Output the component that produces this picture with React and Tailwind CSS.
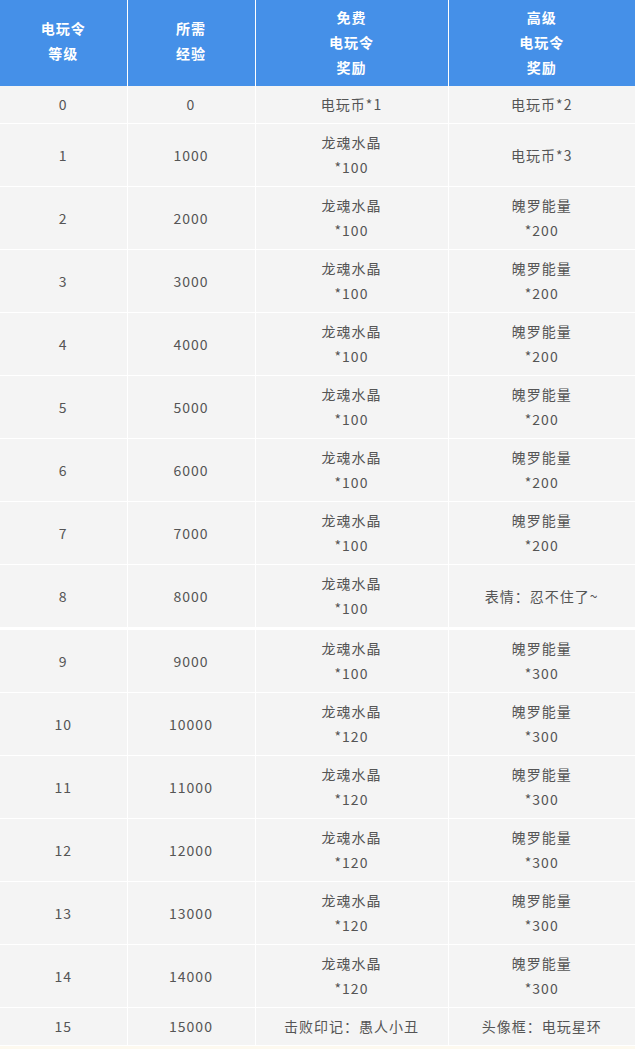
import React from 'react';

const rows = [
  ['0', '0', ['电玩币*1'], ['电玩币*2']],
  ['1', '1000', ['龙魂水晶', '*100'], ['电玩币*3']],
  ['2', '2000', ['龙魂水晶', '*100'], ['魄罗能量', '*200']],
  ['3', '3000', ['龙魂水晶', '*100'], ['魄罗能量', '*200']],
  ['4', '4000', ['龙魂水晶', '*100'], ['魄罗能量', '*200']],
  ['5', '5000', ['龙魂水晶', '*100'], ['魄罗能量', '*200']],
  ['6', '6000', ['龙魂水晶', '*100'], ['魄罗能量', '*200']],
  ['7', '7000', ['龙魂水晶', '*100'], ['魄罗能量', '*200']],
  ['8', '8000', ['龙魂水晶', '*100'], ['表情：忍不住了~']],
  ['9', '9000', ['龙魂水晶', '*100'], ['魄罗能量', '*300']],
  ['10', '10000', ['龙魂水晶', '*120'], ['魄罗能量', '*300']],
  ['11', '11000', ['龙魂水晶', '*120'], ['魄罗能量', '*300']],
  ['12', '12000', ['龙魂水晶', '*120'], ['魄罗能量', '*300']],
  ['13', '13000', ['龙魂水晶', '*120'], ['魄罗能量', '*300']],
  ['14', '14000', ['龙魂水晶', '*120'], ['魄罗能量', '*300']],
  ['15', '15000', ['击败印记：愚人小丑'], ['头像框：电玩星环']],
];

const Lines = ({ items }) => items.map((t, i) => <div key={i}>{t}</div>);

export default function App() {
  return (
    <div className="min-h-screen bg-[#fdf9ef] font-['Noto_Sans_CJK_SC',sans-serif]">
      <table className="w-[635px] table-fixed border-collapse text-center text-[14px] leading-[25px] tracking-[1px]">
        <colgroup>
          <col className="w-[127px]" />
          <col className="w-[128px]" />
          <col className="w-[193px]" />
          <col className="w-[187px]" />
        </colgroup>
        <thead>
          {/* Header */}
          <tr className="bg-[#4590e8] font-bold text-white">
            <th className="h-[86px] border-r border-white p-0 pb-[5px]">
              <Lines items={['电玩令', '等级']} />
            </th>
            <th className="border-r border-white p-0 pb-[5px]">
              <Lines items={['所需', '经验']} />
            </th>
            <th className="border-r border-white p-0 pb-[2px]">
              <Lines items={['免费', '电玩令', '奖励']} />
            </th>
            <th className="p-0 pb-[2px]">
              <Lines items={['高级', '电玩令', '奖励']} />
            </th>
          </tr>
        </thead>
        <tbody className="text-[#555]">
          {rows.map((r, i) => (
            <tr
              key={i}
              className={
                'bg-[#f4f4f4] ' +
                (i === 8 ? 'border-b-[3px] border-white' : 'border-b border-white')
              }
            >
              <td className="border-r border-white px-1 py-[6px]">{r[0]}</td>
              <td className="border-r border-white px-1 py-[6px]">{r[1]}</td>
              <td className="border-r border-white px-1 py-[6px]">
                <Lines items={r[2]} />
              </td>
              <td className="px-1 py-[6px]">
                <Lines items={r[3]} />
              </td>
            </tr>
          ))}
        </tbody>
      </table>
    </div>
  );
}
